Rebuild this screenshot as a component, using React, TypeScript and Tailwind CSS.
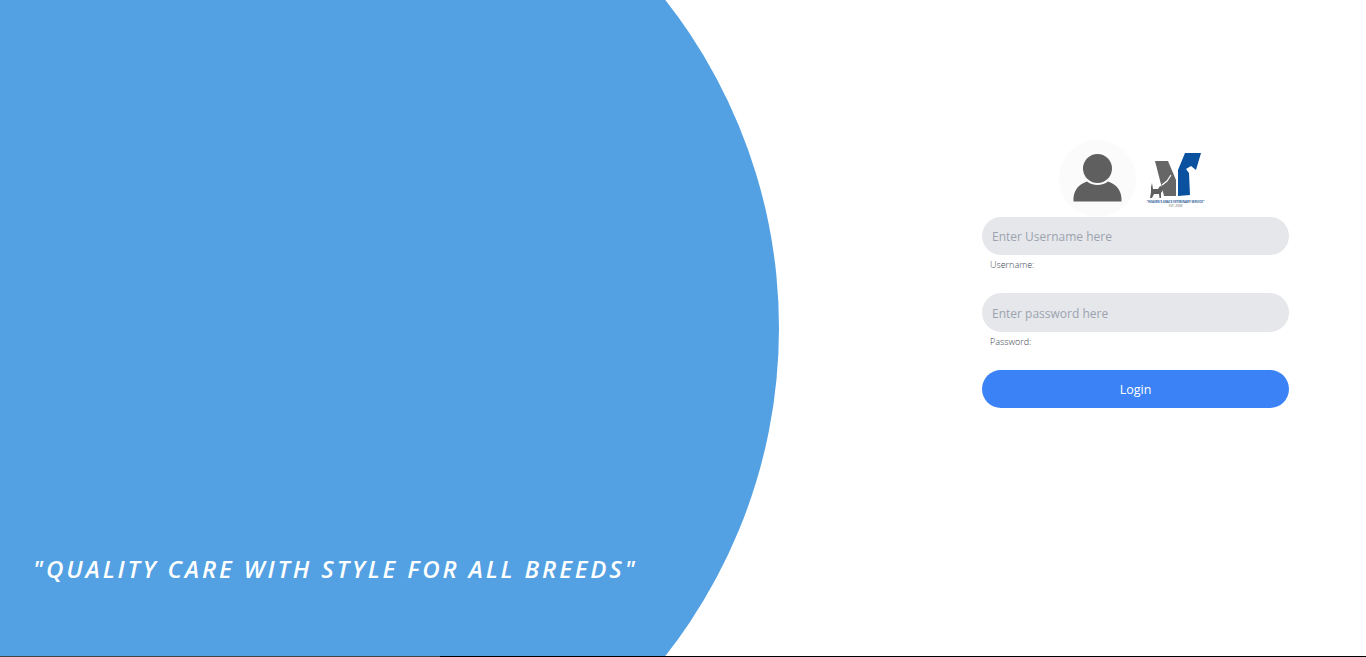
import React from 'react';

const UserAvatar = () => (
  <div className="w-[77px] h-[77px] rounded-full bg-[#fbfbfb] flex-shrink-0">
    <svg viewBox="0 0 77 77" className="w-[77px] h-[77px]">
      <circle cx="38.5" cy="28.5" r="14.5" fill="#5f5f5f" />
      <path d="M14.5 61.5 C14 52 18 45 28 41.5 C33 46 44 46 49 41.5 C59 45 63 52 62.5 61.5 Z" fill="#5f5f5f" />
    </svg>
  </div>
);

const ClinicLogo = () => (
  <div className="w-[61px] flex flex-col items-center">
    <svg viewBox="0 0 61 48" className="w-[61px] h-[48px]">
      <path d="M10 11 L23 11 L31 30 L31 46 L19 46 Z" fill="#666666" />
      <path d="M33 20 L40 3 L56 3 L51 20 L46 16 L41 19 L44 23 L45 45 L33 46 Z" fill="#0a52a0" />
      {/* white back line of the dog, then the cat */}
      <path d="M17 35 L22 31 L26 25" fill="none" stroke="#ffffff" strokeWidth="1.2" />
      <path d="M5 48 L6 42 L6 37 L7 33 L8 39 L13 39 L15 36 L18 37 L17.5 41 L16 43 L16 48 L14.5 48 L14 44 L9 44 L7 48 Z" fill="#5f5f5f" />
    </svg>
    <span className="block w-full mt-[2px] text-center text-[2.9px] leading-[4px] font-bold text-[#2b5a96] whitespace-nowrap">"HEAVEN'S GRACE VETERINARY SERVICE"</span>
    <span className="block w-full text-center text-[3px] leading-[4px] text-[#666666]">EST. 2008</span>
  </div>
);

export default function App() {
  return (
    <div className="relative h-screen w-full overflow-hidden bg-white font-['Open_Sans',sans-serif]">
      {/* big blue circle behind the tagline */}
      <div className="absolute left-[-281px] top-[-202px] w-[1060px] h-[1060px] rounded-full bg-[#53a1e3]" />
      <div className="absolute left-0 right-0 bottom-0 h-px flex">
        <div className="w-[440px] bg-[#444444]" />
        <div className="flex-1 bg-black" />
      </div>

      <p className="absolute left-[33px] top-[552px] text-white italic font-semibold text-[24px] leading-[34px] tracking-[0.12em] whitespace-nowrap">
        "QUALITY CARE WITH STYLE FOR ALL BREEDS"
      </p>

      <div className="absolute left-[982px] top-[140px] w-[307px]">
        <div className="flex justify-center items-start gap-[9px] pr-[6px] h-[77px]">
          <UserAvatar />
          <div className="pt-[10px]">
            <ClinicLogo />
          </div>
        </div>
        <form className="flex flex-col">
          <input
            placeholder="Enter Username here"
            className="h-[38px] w-full rounded-full bg-[#e5e7eb] px-[10px] text-[12px] placeholder:text-[#9ca3af] outline-none"
          />
          <label className="pl-[8px] pt-[3px] h-[38px] text-[9px] font-light leading-[14px] text-[#374151]">Username:</label>
          <input
            placeholder="Enter password here"
            className="h-[39px] w-full rounded-full bg-[#e5e7eb] px-[10px] pt-[2px] text-[12px] placeholder:text-[#9ca3af] outline-none"
          />
          <label className="pl-[8px] pt-[3px] h-[38px] text-[9px] font-light leading-[14px] text-[#374151]">Password:</label>
          <button type="button" className="h-[38px] w-full rounded-full bg-[#3b82f6] pt-[3px] text-white text-[12.5px] font-medium">
            Login
          </button>
        </form>
      </div>
    </div>
  );
}
